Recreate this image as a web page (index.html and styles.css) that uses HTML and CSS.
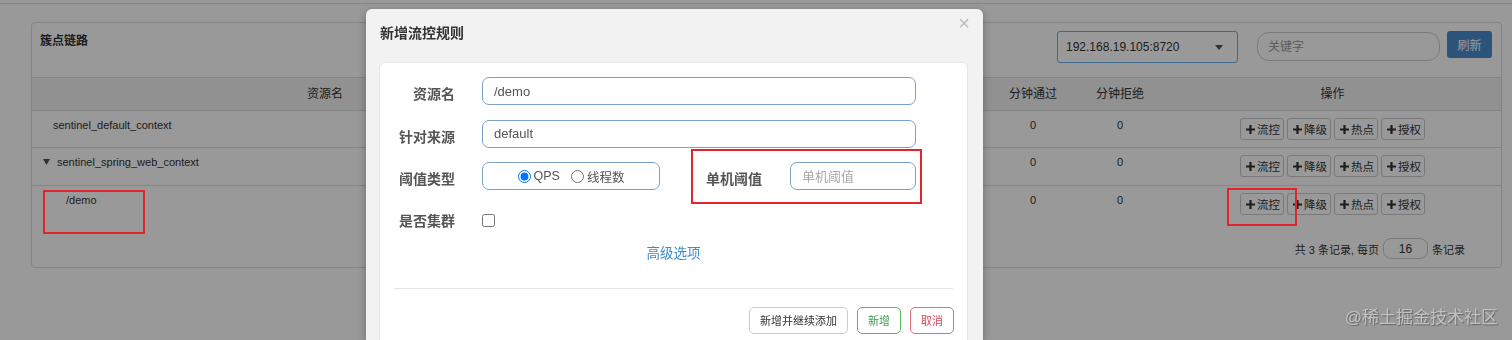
FILE: index.html
```html
<!DOCTYPE html>
<html lang="zh-CN">
<head>
    <meta charset="utf-8">
    <meta name="viewport" content="width=device-width, initial-scale=1.0">
    <title>Sentinel 控制台 - 簇点链路</title>
    <link rel="stylesheet" href="styles.css">
</head>
<body>
    <div class="topbar"></div>

    <!-- 簇点链路面板 -->
    <div class="panel">
        <div class="panel-head">
            <div class="panel-title">簇点链路</div>
            <div class="tools">
                <div class="select">192.168.19.105:8720<span class="caret"></span></div>
                <input class="search" placeholder="关键字">
                <button class="btn-refresh">刷新</button>
            </div>
        </div>

        <div class="row thead">
            <div>资源名</div>
            <div>通过QPS</div>
            <div>拒绝QPS</div>
            <div>并发数</div>
            <div>平均RT</div>
            <div>分钟通过</div>
            <div>分钟拒绝</div>
            <div>操作</div>
        </div>

        <div class="row row-1">
            <div class="name lvl-0">sentinel_default_context</div>
            <div class="num">0</div>
            <div class="num">0</div>
            <div class="num">0</div>
            <div class="num">0</div>
            <div class="num">0</div>
            <div class="num">0</div>
            <div class="ops">
                <button class="op"><svg width="9" height="9" viewBox="0 0 9 9"><path d="M3.4 0h2.2v3.4H9v2.2H5.6V9H3.4V5.6H0V3.4h3.4z"/></svg>流控</button>
                <button class="op"><svg width="9" height="9" viewBox="0 0 9 9"><path d="M3.4 0h2.2v3.4H9v2.2H5.6V9H3.4V5.6H0V3.4h3.4z"/></svg>降级</button>
                <button class="op"><svg width="9" height="9" viewBox="0 0 9 9"><path d="M3.4 0h2.2v3.4H9v2.2H5.6V9H3.4V5.6H0V3.4h3.4z"/></svg>热点</button>
                <button class="op"><svg width="9" height="9" viewBox="0 0 9 9"><path d="M3.4 0h2.2v3.4H9v2.2H5.6V9H3.4V5.6H0V3.4h3.4z"/></svg>授权</button>
            </div>
        </div>

        <div class="row row-2">
            <div class="name lvl-tree"><svg class="toggle" width="7" height="6" viewBox="0 0 7 6"><polygon points="0,0 7,0 3.5,6"/></svg>sentinel_spring_web_context</div>
            <div class="num">0</div>
            <div class="num">0</div>
            <div class="num">0</div>
            <div class="num">0</div>
            <div class="num">0</div>
            <div class="num">0</div>
            <div class="ops">
                <button class="op"><svg width="9" height="9" viewBox="0 0 9 9"><path d="M3.4 0h2.2v3.4H9v2.2H5.6V9H3.4V5.6H0V3.4h3.4z"/></svg>流控</button>
                <button class="op"><svg width="9" height="9" viewBox="0 0 9 9"><path d="M3.4 0h2.2v3.4H9v2.2H5.6V9H3.4V5.6H0V3.4h3.4z"/></svg>降级</button>
                <button class="op"><svg width="9" height="9" viewBox="0 0 9 9"><path d="M3.4 0h2.2v3.4H9v2.2H5.6V9H3.4V5.6H0V3.4h3.4z"/></svg>热点</button>
                <button class="op"><svg width="9" height="9" viewBox="0 0 9 9"><path d="M3.4 0h2.2v3.4H9v2.2H5.6V9H3.4V5.6H0V3.4h3.4z"/></svg>授权</button>
            </div>
        </div>

        <div class="row row-3">
            <div class="name lvl-1">/demo</div>
            <div class="num">0</div>
            <div class="num">0</div>
            <div class="num">0</div>
            <div class="num">0</div>
            <div class="num">0</div>
            <div class="num">0</div>
            <div class="ops">
                <button class="op"><svg width="9" height="9" viewBox="0 0 9 9"><path d="M3.4 0h2.2v3.4H9v2.2H5.6V9H3.4V5.6H0V3.4h3.4z"/></svg>流控</button>
                <button class="op"><svg width="9" height="9" viewBox="0 0 9 9"><path d="M3.4 0h2.2v3.4H9v2.2H5.6V9H3.4V5.6H0V3.4h3.4z"/></svg>降级</button>
                <button class="op"><svg width="9" height="9" viewBox="0 0 9 9"><path d="M3.4 0h2.2v3.4H9v2.2H5.6V9H3.4V5.6H0V3.4h3.4z"/></svg>热点</button>
                <button class="op"><svg width="9" height="9" viewBox="0 0 9 9"><path d="M3.4 0h2.2v3.4H9v2.2H5.6V9H3.4V5.6H0V3.4h3.4z"/></svg>授权</button>
            </div>
        </div>

        <div class="pager">
            <span>共 3 条记录, 每页</span>
            <input class="page-size" value="16">
            <span>条记录</span>
        </div>
    </div>

    <!-- 遮罩 -->
    <div class="mask"></div>

    <!-- 新增流控规则弹窗 -->
    <div class="modal">
        <div class="modal-head">
            <div class="modal-title">新增流控规则</div>
            <div class="close">&times;</div>
        </div>
        <div class="modal-body">
            <div class="form-row">
                <label class="label">资源名</label>
                <input class="text-input" value="/demo">
            </div>
            <div class="form-row">
                <label class="label">针对来源</label>
                <input class="text-input" value="default">
            </div>
            <div class="form-row">
                <label class="label">阈值类型</label>
                <div class="radio-box">
                    <label class="radio"><input type="radio" name="grade" checked>QPS</label>
                    <label class="radio"><input type="radio" name="grade">线程数</label>
                </div>
                <label class="label label-count">单机阈值</label>
                <input class="text-input input-count" placeholder="单机阈值">
            </div>
            <div class="form-row row-cluster">
                <label class="label">是否集群</label>
                <input class="check" type="checkbox">
            </div>
            <div class="advanced">高级选项</div>
            <div class="divider"></div>
            <div class="footer">
                <button class="btn">新增并继续添加</button>
                <button class="btn btn-ok">新增</button>
                <button class="btn btn-cancel">取消</button>
            </div>
        </div>
    </div>

    <!-- 红框标注 -->
    <div class="mark mark-demo"></div>
    <div class="mark mark-flow"></div>
    <div class="mark mark-count"></div>

    <div class="watermark">@稀土掘金技术社区</div>
</body>
</html>
```

FILE: styles.css
```css
body {
    font-family: 'Liberation Sans', 'Noto Sans CJK SC', sans-serif;
    margin: 0;
    padding: 0;
    background-color: #fff;
    color: #333;
    height: 340px;
    overflow: hidden;
}
.topbar {
    height: 3px;
    border-bottom: 1px solid #ddd;
}

/* 面板 */
.panel {
    margin: 18px 10px 0 31px;
    border: 1px solid #ddd;
    border-radius: 4px;
}
.panel-head {
    display: flex;
    justify-content: space-between;
    align-items: flex-start;
    height: 54px;
    padding: 0 9px 0 8px;
    border-bottom: 1px solid #ddd;
}
.panel-title {
    font-size: 12px;
    font-weight: bold;
    line-height: 18px;
    margin-top: 9px;
}
.tools {
    display: flex;
    align-items: flex-start;
    margin-top: 8px;
}
.select {
    box-sizing: border-box;
    width: 181px;
    height: 32px;
    border: 1px solid #66afe9;
    border-radius: 3px;
    padding-left: 8px;
    font-size: 12px;
    line-height: 30px;
    display: flex;
    justify-content: space-between;
    align-items: center;
}
.caret {
    width: 0;
    height: 0;
    margin-right: 14px;
    border-left: 4px solid transparent;
    border-right: 4px solid transparent;
    border-top: 5px solid #555;
}
.search {
    box-sizing: border-box;
    width: 183px;
    height: 29px;
    margin: 1px 0 0 19px;
    border: 1px solid #ccc;
    border-radius: 12px;
    padding: 0 10px;
    font-family: inherit;
    font-size: 12px;
    outline: none;
}
.search::placeholder {
    color: #999;
}
.btn-refresh {
    width: 45px;
    height: 27px;
    margin-left: 7px;
    border: none;
    border-radius: 3px;
    background: #4a8cce;
    color: #fff;
    font-family: inherit;
    font-size: 12px;
    padding: 0;
}

/* 表格 */
.row {
    display: grid;
    grid-template-columns: 586px repeat(4, 93px) 86px 88px 1fr;
    border-bottom: 1px solid #ddd;
    font-size: 11px;
    line-height: 16px;
}
.thead {
    height: 32px;
    align-items: center;
    text-align: center;
    font-size: 12px;
    background: #f2f2f2;
}
.row-1 { height: 36px; }
.row-2 { height: 37px; }
.row-3 { height: 44px; border-bottom: none; }
.name, .num {
    padding-top: 6px;
    color: #333;
}
.num {
    text-align: center;
}
.lvl-0 { padding-left: 21px; }
.lvl-1 { padding-left: 34px; }
.lvl-tree {
    padding-left: 11px;
    display: flex;
    align-items: flex-start;
}
.toggle {
    fill: #555;
    margin: 5px 7px 0 0;
}
.ops {
    display: flex;
    justify-content: center;
    gap: 3px;
    padding-top: 7px;
}
.op {
    box-sizing: border-box;
    height: 22px;
    width: 44px;
    display: flex;
    align-items: center;
    gap: 2px;
    padding: 0 0 0 5px;
    border: 1px solid #ccc;
    border-radius: 3px;
    background: #fff;
    color: #333;
    font-family: inherit;
    font-size: 11.5px;
}
.op svg {
    fill: #333;
}
.pager {
    height: 37px;
    display: flex;
    justify-content: flex-end;
    align-items: center;
    gap: 4px;
    padding-right: 36px;
    font-size: 11px;
}
.page-size {
    box-sizing: border-box;
    width: 45px;
    height: 21px;
    border: 1px solid #ccc;
    border-radius: 8px;
    text-align: center;
    font-family: inherit;
    font-size: 12px;
    color: #333;
}

/* 遮罩 */
.mask {
    position: fixed;
    top: 0;
    left: 0;
    right: 0;
    bottom: 0;
    background: rgba(0, 0, 0, 0.4);
}

/* 弹窗 */
.modal {
    position: absolute;
    left: 366px;
    top: 9px;
    width: 617px;
    height: 331px;
    overflow: hidden;
    background: #f2f2f2;
    border-radius: 6px 6px 0 0;
    box-shadow: 0 3px 9px rgba(0, 0, 0, 0.3);
}
.modal-head {
    display: flex;
    justify-content: space-between;
    align-items: flex-start;
    height: 53px;
    padding: 0 13px 0 14px;
}
.modal-title {
    margin-top: 15px;
    font-size: 14px;
    line-height: 18px;
    font-weight: bold;
    color: #333;
}
.close {
    margin-top: 4px;
    font-size: 20px;
    line-height: 20px;
    color: #bbb;
}
.modal-body {
    margin: 0 15px 0 13px;
    height: 300px;
    padding-top: 14px;
    background: #fff;
    border: 1px solid #e6e6e6;
    border-radius: 6px;
}
.form-row {
    display: flex;
    align-items: center;
    height: 28px;
    margin-bottom: 14.5px;
}
.label {
    width: 75px;
    margin-right: 27px;
    padding-top: 4px;
    text-align: right;
    font-size: 14px;
    font-weight: bold;
    color: #555;
}
.text-input {
    box-sizing: border-box;
    width: 434px;
    height: 28px;
    padding: 0 11px;
    border: 1px solid #7ba1c7;
    border-radius: 7px;
    font-family: inherit;
    font-size: 13px;
    color: #555;
    outline: none;
}
.text-input::placeholder {
    color: #aaa;
}
.radio-box {
    box-sizing: border-box;
    width: 178px;
    height: 28px;
    display: flex;
    justify-content: center;
    align-items: center;
    gap: 11px;
    border: 1px solid #7ba1c7;
    border-radius: 7px;
    font-size: 12.5px;
    color: #555;
}
.radio {
    display: flex;
    align-items: center;
}
.radio input {
    margin: 0 3px 0 0;
    width: 13px;
    height: 13px;
}
.label-count {
    width: 102px;
    margin-right: 28px;
}
.input-count {
    width: 126px;
}
.row-cluster {
    margin-bottom: 11px;
}
.row-cluster .label {
    padding-top: 2px;
}
.check {
    margin: 4px 0 0 0;
    width: 13px;
    height: 13px;
}
.advanced {
    text-align: center;
    font-size: 13.5px;
    line-height: 20px;
    color: #3c8dd0;
}
.divider {
    margin: 24px 14px 0;
    border-top: 1px solid #e5e5e5;
}
.footer {
    display: flex;
    justify-content: flex-end;
    gap: 9px;
    padding: 18px 13px 0 0;
}
.btn {
    height: 27px;
    padding: 0 10px;
    border: 1px solid #ccc;
    border-radius: 5px;
    background: #fff;
    color: #333;
    font-family: inherit;
    font-size: 11px;
}
.btn-ok {
    border-color: #5cb85c;
    color: #3e9e48;
}
.btn-cancel {
    border-color: #e0707a;
    color: #dd4455;
}

/* 红框标注 */
.mark {
    position: absolute;
    box-sizing: border-box;
    border: 2px solid #e0262c;
}
.mark-demo {
    left: 43px;
    top: 190px;
    width: 102px;
    height: 44px;
}
.mark-flow {
    left: 1227px;
    top: 188px;
    width: 70px;
    height: 38px;
}
.mark-count {
    left: 691px;
    top: 149px;
    width: 231px;
    height: 55px;
}

.watermark {
    position: absolute;
    right: 14px;
    bottom: 12px;
    font-size: 17px;
    color: #c2c2c2;
    text-shadow: 1px 1px 1px rgba(0, 0, 0, 0.35);
}
```
